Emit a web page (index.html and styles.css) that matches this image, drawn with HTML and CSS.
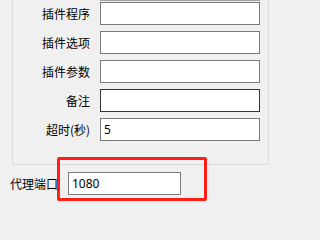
FILE: index.html
```html
<!DOCTYPE html>
<html lang="zh-CN">
<head>
<meta charset="utf-8">
<title>插件设置</title>
<link rel="stylesheet" href="styles.css">
</head>
<body>
<div class="group">
  <div class="row partial">
    <span class="label"></span>
    <input class="field" type="text" value="">
  </div>
  <div class="row">
    <span class="label">插件程序</span>
    <input class="field" type="text" value="">
  </div>
  <div class="row">
    <span class="label">插件选项</span>
    <input class="field" type="text" value="">
  </div>
  <div class="row">
    <span class="label">插件参数</span>
    <input class="field" type="text" value="">
  </div>
  <div class="row">
    <span class="label">备注</span>
    <input class="field focused" type="text" value="">
  </div>
  <div class="row">
    <span class="label">超时(秒)</span>
    <input class="field" type="text" value="5">
  </div>
</div>
<div class="proxy-row">
  <span class="proxy-label">代理端口</span>
  <input class="field proxy-field" type="text" value="1080">
</div>
<div class="highlight"></div>
</body>
</html>
```
FILE: styles.css
```css
html, body {
  margin: 0;
  padding: 0;
}
body {
  width: 276px;
  height: 202px;
  overflow: hidden;
  position: relative;
  background: #f0f0f0;
  font-family: "Noto Sans CJK SC", "Noto Sans", sans-serif;
  font-size: 12px;
  color: #000;
}
.group {
  box-sizing: border-box;
  margin-top: -22px;
  margin-left: 12px;
  width: 257px;
  border: 1px solid #dcdcdc;
  border-top: none;
  padding-bottom: 23px;
  display: flex;
  flex-direction: column;
  gap: 6px;
}
.row {
  display: flex;
  align-items: center;
}
.row.partial {
  margin-bottom: -5px;
}
.label {
  width: 77px;
  margin-right: 10px;
  text-align: right;
  white-space: nowrap;
  line-height: 16px;
}
.field {
  box-sizing: border-box;
  width: 160px;
  height: 23px;
  margin: 0;
  padding: 0 3px;
  border: 1px solid #7a7a7a;
  border-radius: 0;
  background: #fff;
  font-family: "Noto Sans", "Noto Sans CJK SC", sans-serif;
  font-size: 12px;
  color: #000;
  outline: none;
}
.partial .field {
  border-color: #a0a0a0;
}
.field.focused {
  border-color: #333;
}
.proxy-row {
  display: flex;
  align-items: center;
  margin-top: 7px;
  padding-left: 10px;
}
.proxy-label {
  width: 48px;
  margin-right: 10px;
  white-space: nowrap;
  line-height: 16px;
}
.proxy-field {
  width: 113px;
}
.highlight {
  position: absolute;
  left: 57px;
  top: 157px;
  width: 150px;
  height: 44px;
  box-sizing: border-box;
  border: 3px solid #ff1f17;
  border-radius: 2px;
}
```
